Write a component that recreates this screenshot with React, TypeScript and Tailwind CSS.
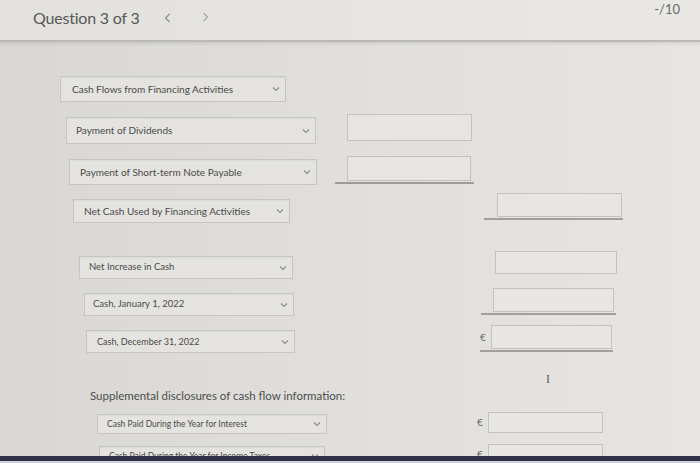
import React from "react";

const font = { fontFamily: "Lato, 'Open Sans', sans-serif" };

function Chevron() {
  return (
    <svg width="8" height="6" viewBox="0 0 8 6" className="shrink-0">
      <path d="M1 1.5 L4 4.5 L7 1.5" fill="none" stroke="#8c8c8c" strokeWidth="1.2" />
    </svg>
  );
}

function Select({ label, className }: { label: string; className: string }) {
  return (
    <div
      className={
        "flex items-center justify-between border border-[#c6c5c1] bg-[#e4e3e0] shadow-[inset_0_1px_1px_rgba(0,0,0,0.04)] pr-[5px] " +
        className
      }
    >
      <span className="text-[#4a4a48] whitespace-nowrap">{label}</span>
      <Chevron />
    </div>
  );
}

export default function App() {
  return (
    <div
      className="relative w-[700px] h-[463px] overflow-hidden flex flex-col bg-gradient-to-r from-[#d8d7d3] via-[#e0dfdc] to-[#e6e5e2]"
      style={font}
    >
      {/* header */}
      <div className="relative h-[42px] shrink-0 border-b-2 border-[#bab9b5] shadow-[0_2px_3px_rgba(0,0,0,0.08)] bg-gradient-to-r from-[#e2e1de] to-[#e9e8e5] flex items-start">
        <div className="ml-[33px] mt-[6px] text-[16px] text-[#585856] tracking-[-0.2px]">Question 3 of 3</div>
        <svg width="7" height="10" viewBox="0 0 7 10" className="ml-[24px] mt-[13px]">
          <path d="M5.5 1 L1.5 5 L5.5 9" fill="none" stroke="#8a8a88" strokeWidth="1.1" />
        </svg>
        <svg width="7" height="10" viewBox="0 0 7 10" className="ml-[31px] mt-[12px]">
          <path d="M1.5 1 L5.5 5 L1.5 9" fill="none" stroke="#a2a2a0" strokeWidth="1.1" />
        </svg>
        <div className="ml-auto mr-[20px] mt-[1px] text-[13px] leading-[16px] text-[#6a6a68]">-/10</div>
      </div>

      {/* body */}
      <div className="flex-1 overflow-hidden flex flex-col">
        {/* R1 */}
        <div className="mt-[34px] flex items-start">
          <Select label="Cash Flows from Financing Activities" className="ml-[60px] w-[226px] h-[26px] pl-[11px] text-[10px]" />
        </div>

        {/* R2 */}
        <div className="mt-[12px] flex items-start h-[31px]">
          <Select label="Payment of Dividends" className="ml-[66px] mt-[3px] w-[250px] h-[27px] pl-[9px] text-[10px]" />
          <div className="ml-[31px] w-[125px] h-[27px] border border-[#c3c2be] bg-[#e6e5e2]" />
        </div>

        {/* R3 */}
        <div className="mt-[12px] flex items-start h-[29px]">
          <Select label="Payment of Short-term Note Payable" className="ml-[69px] mt-[3px] w-[248px] h-[26px] pl-[10px] text-[10px]" />
          <div className="ml-[18px] w-[139px] flex flex-col">
            <div className="ml-[12px] w-[124px] h-[25px] border border-[#c3c2be] bg-[#e6e5e2]" />
            <div className="mt-[1px] h-[2px] bg-[#9d9c98]" />
          </div>
        </div>

        {/* R4 */}
        <div className="mt-[8px] flex items-start h-[30px]">
          <Select label="Net Cash Used by Financing Activities" className="ml-[73px] mt-[6px] w-[217px] h-[24px] pl-[10px] text-[10px]" />
          <div className="ml-[194px] w-[139px] flex flex-col">
            <div className="ml-[13px] w-[125px] h-[24px] border border-[#c3c2be] bg-[#e7e6e3]" />
            <div className="mt-[1px] h-[2px] bg-[#a09f9b]" />
          </div>
        </div>

        {/* R5 */}
        <div className="mt-[28px] flex items-start h-[28px]">
          <Select label="Net Increase in Cash" className="ml-[79px] mt-[5px] w-[214px] h-[23px] pl-[9px] text-[9.5px]" />
          <div className="ml-[202px] w-[122px] h-[23px] border border-[#c3c2be] bg-[#e7e6e3]" />
        </div>

        {/* R6 */}
        <div className="mt-[9px] flex items-start h-[28px]">
          <Select label="Cash, January 1, 2022" className="ml-[84px] mt-[5px] w-[210px] h-[23px] pl-[8px] text-[9.5px]" />
          <div className="ml-[187px] w-[135px] flex flex-col">
            <div className="ml-[12px] w-[121px] h-[24px] border border-[#c3c2be] bg-[#e7e6e3]" />
            <div className="mt-[1px] h-[2px] bg-[#a09f9b]" />
          </div>
        </div>

        {/* R7 */}
        <div className="mt-[9px] flex items-start h-[28px]">
          <Select label="Cash, December 31, 2022" className="ml-[86px] mt-[5px] w-[209px] h-[23px] pl-[10px] text-[9px]" />
          <div className="ml-[185px] w-[133px] flex flex-col">
            <div className="flex items-center">
              <span className="w-[11px] text-[10px] text-[#6a6a68]">€</span>
              <div className="w-[121px] h-[24px] border border-[#c3c2be] bg-[#e7e6e3]" />
            </div>
            <div className="mt-[1px] h-[2px] bg-[#a09f9b]" />
          </div>
        </div>

        {/* supplemental */}
        <div className="mt-[35px] ml-[90px] text-[11.5px] text-[#4e4e4c] h-[16px] leading-[16px]">
          Supplemental disclosures of cash flow information:
        </div>

        {/* R9 */}
        <div className="mt-[8px] flex items-start h-[22px]">
          <Select label="Cash Paid During the Year for Interest" className="ml-[97px] mt-[2px] w-[230px] h-[20px] pl-[9px] text-[8.5px]" />
          <div className="ml-[150px] flex items-center">
            <span className="w-[11px] text-[10px] text-[#6a6a68]">€</span>
            <div className="w-[115px] h-[21px] border border-[#c3c2be] bg-[#e7e6e3]" />
          </div>
        </div>

        {/* R10 (cut off) */}
        <div className="mt-[10px] flex items-start h-[22px]">
          <Select label="Cash Paid During the Year for Income Taxes" className="ml-[99px] mt-[2px] w-[226px] h-[20px] pl-[9px] text-[8.5px]" />
          <div className="ml-[152px] flex items-center">
            <span className="w-[11px] text-[10px] text-[#6a6a68]">€</span>
            <div className="w-[115px] h-[21px] border border-[#c3c2be] bg-[#e7e6e3]" />
          </div>
        </div>
      </div>

      {/* bottom bar */}
      <div className="shrink-0 h-[5px] bg-[#2f3146]" />
      <div className="shrink-0 h-[2px] bg-[#cfd0de]" />

      {/* text cursor */}
      <div className="absolute left-[546px] top-[370px] text-[12px] text-[#5a5a58]" style={{ fontFamily: "'Liberation Serif', serif" }}>
        I
      </div>
    </div>
  );
}
